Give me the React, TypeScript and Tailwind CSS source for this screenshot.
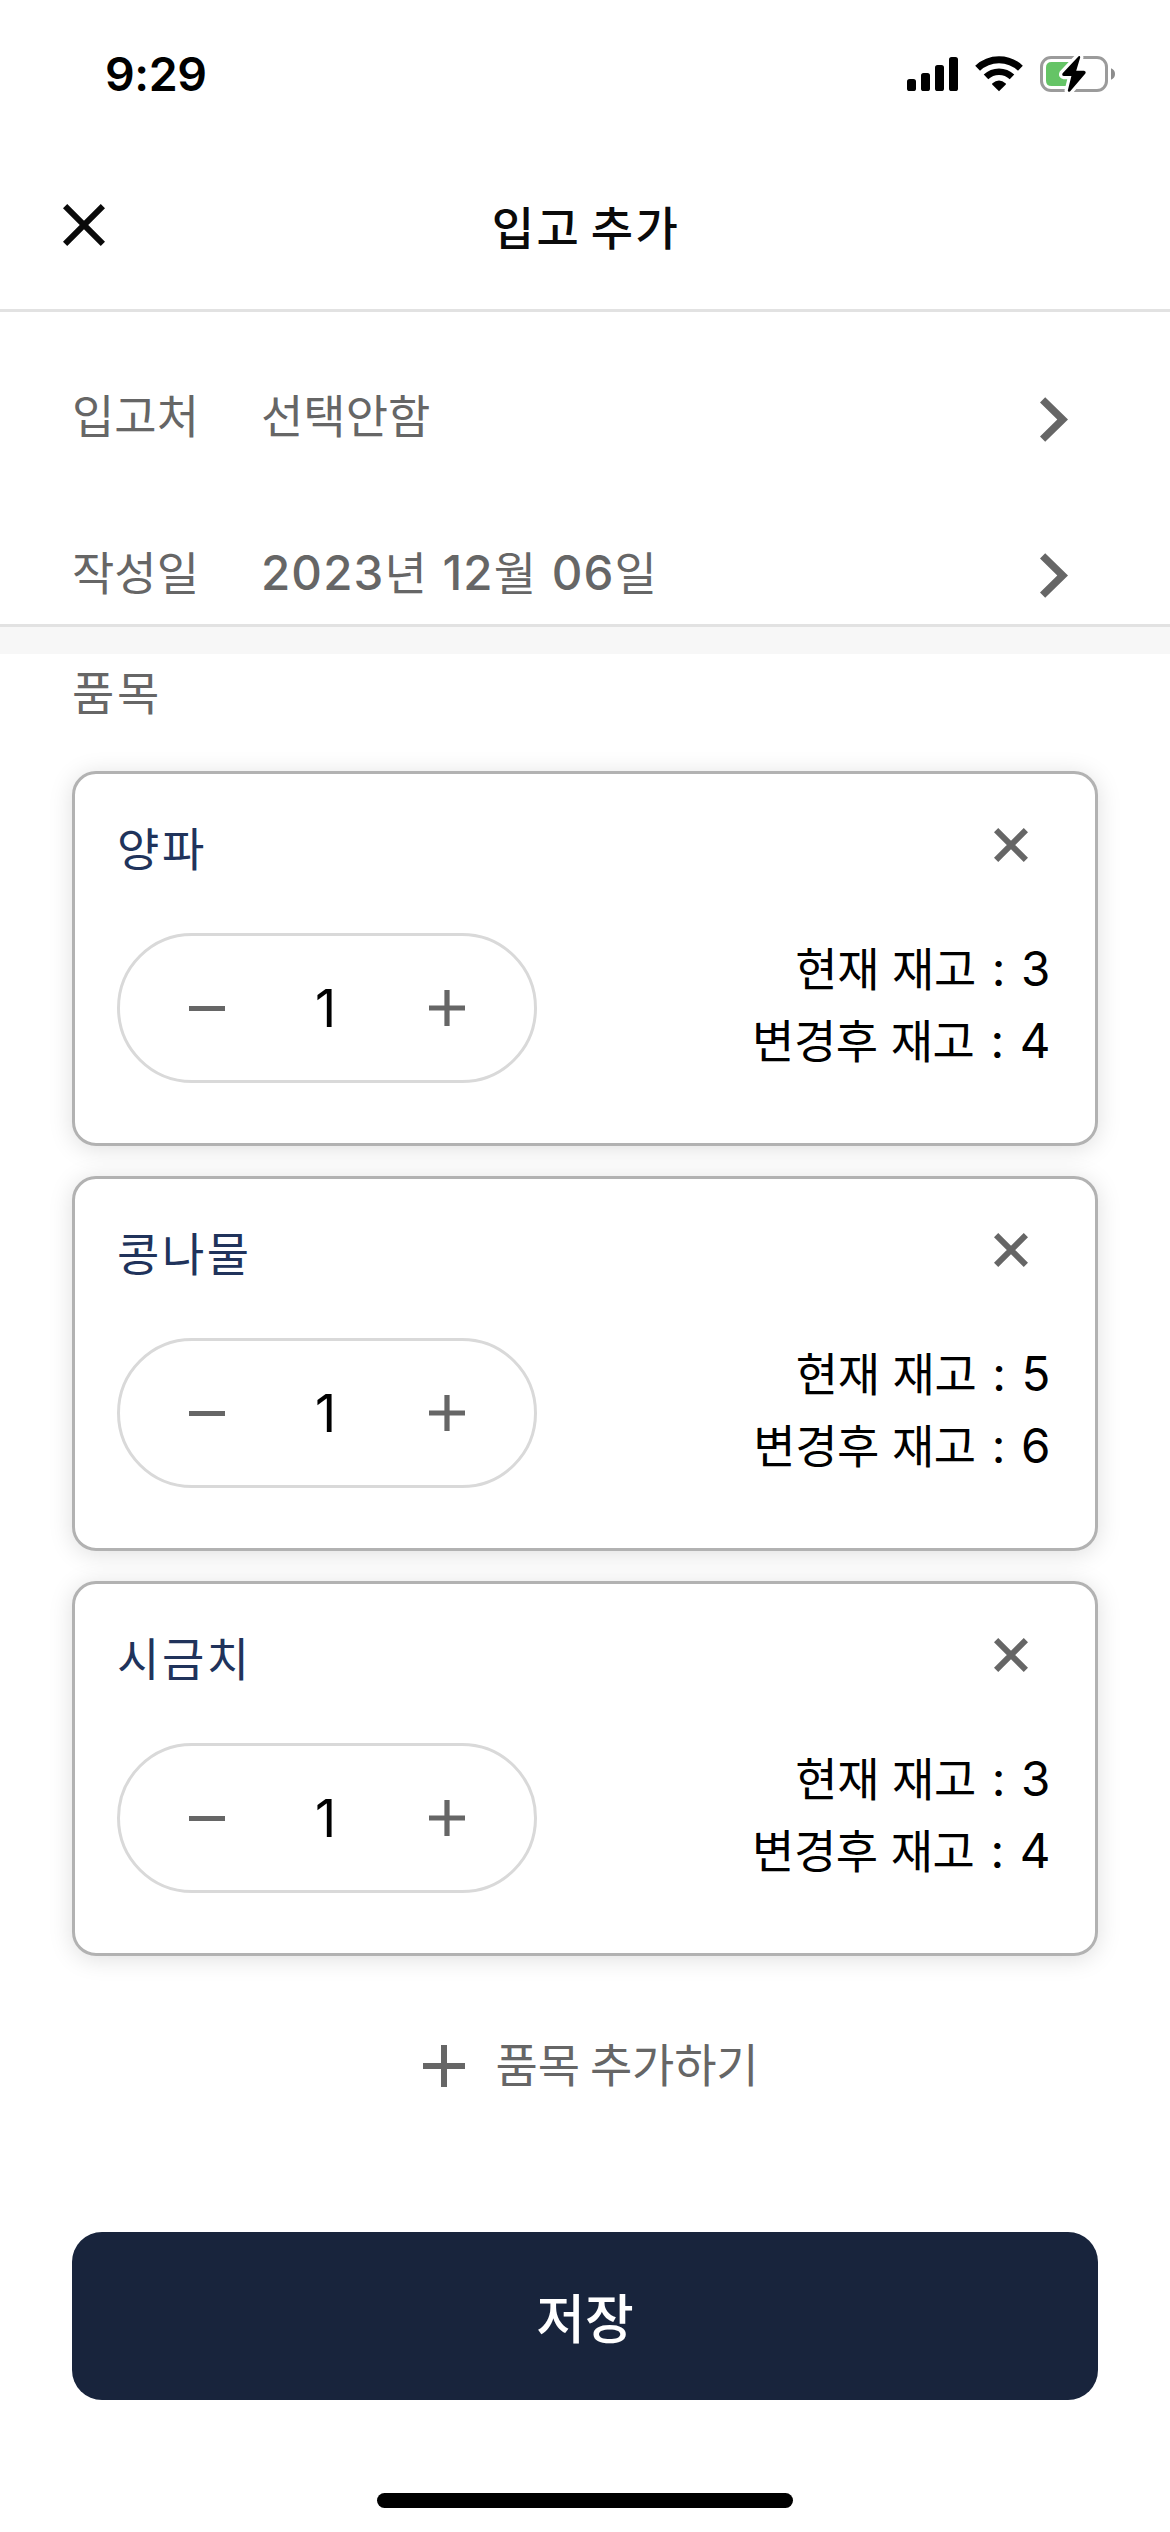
import React from "react";

type Item = { name: string; quantity: number; current: number; after: number };

const items: Item[] = [
  { name: "양파", quantity: 1, current: 3, after: 4 },
  { name: "콩나물", quantity: 1, current: 5, after: 6 },
  { name: "시금치", quantity: 1, current: 3, after: 4 },
];

function Num({ children, className = "" }: { children: React.ReactNode; className?: string }) {
  return <span className={`font-['Inter'] text-[47.5px] ${className}`}>{children}</span>;
}

function Cross({ size, stroke, color }: { size: number; stroke: number; color: string }) {
  const e = stroke * 0.3536;
  return (
    <svg width={size} height={size} viewBox={`0 0 ${size} ${size}`} className="block shrink-0">
      <path
        d={`M${e} ${e}L${size - e} ${size - e}M${size - e} ${e}L${e} ${size - e}`}
        stroke={color}
        strokeWidth={stroke}
        fill="none"
      />
    </svg>
  );
}

function Chevron() {
  return (
    <svg width="28" height="45" viewBox="0 0 28 45" className="block shrink-0">
      <path d="M5.2 0.2L28 22.5L5.2 44.8L0 39.6L17.3 22.5L0 5.4Z" fill="#666666" />
    </svg>
  );
}

function StatusIcons() {
  return (
    <svg width="210" height="40" viewBox="906 54 210 40" className="block">
      <rect x="907" y="79" width="9" height="12" rx="2.6" />
      <rect x="921" y="73" width="9" height="18" rx="2.6" />
      <rect x="935" y="65" width="9" height="26" rx="2.6" />
      <rect x="949" y="57" width="9" height="34" rx="2.6" />
      <path d="M977.6 68.2A31 31 0 0 1 1020.4 68.2" fill="none" stroke="#000" strokeWidth="7" />
      <path d="M986 76.9A19 19 0 0 1 1012 76.9" fill="none" stroke="#000" strokeWidth="6.6" />
      <path d="M992.2 83.6Q999 77.6 1005.8 83.6Q1006.2 84.2 1005.6 84.8L999 91.2L992.4 84.8Q991.8 84.2 992.2 83.6Z" />
      <rect x="1041.5" y="57.5" width="65" height="33" rx="9.5" fill="none" stroke="#9b9b9b" strokeWidth="3" />
      <path d="M1111 68.3Q1115 69.8 1115 74Q1115 78.2 1111 79.7Z" fill="#8c8c8c" />
      <path d="M1072 62H1051.5Q1046 62 1046 67.5V80.5Q1046 86 1051.5 86H1072Z" fill="#65c466" />
      <path
        d="M1078.6 56.2L1062.6 73.2Q1061.4 75.6 1064 76H1071.4L1067.8 90.6Q1068.2 92.6 1070 91.4L1085.4 73.6Q1086.4 71.4 1084 70.8H1076.2L1080.2 57.4Q1080.2 55.4 1078.6 56.2Z"
        fill="#000"
        stroke="#fff"
        strokeWidth="6.5"
        strokeLinejoin="round"
        paintOrder="stroke"
      />
    </svg>
  );
}

function Stepper({ value }: { value: number }) {
  return (
    <div className="flex h-[150px] w-[420px] items-center rounded-full border-[3px] border-[#d9d9d9] pl-[69px] pr-[69px]">
      <span className="h-[5px] w-9 bg-[#666666]" />
      <span className="flex-1 pr-[3px] pt-[2px] text-center font-['Inter'] text-[52px] leading-none text-black">{value}</span>
      <svg width="36" height="36" viewBox="0 0 36 36" className="block">
        <path d="M0 18H36M18 0V36" stroke="#666666" strokeWidth="5.2" />
      </svg>
    </div>
  );
}

function ItemCard({ item }: { item: Item }) {
  return (
    <div className="flex h-[375px] flex-col rounded-[24px] border-[3px] border-[#b2b2b2] bg-white px-[42px] shadow-[0_3px_24px_rgba(0,0,0,0.13)]">
      <div className="mt-[36px] flex h-[72px] items-center justify-between pr-[25px]">
        <span className="text-[46px] leading-[72px] tracking-[2.6px] text-[#20335b]">{item.name}</span>
        <div className="pb-[2px]">
          <Cross size={34} stroke={6} color="#666666" />
        </div>
      </div>
      <div className="mt-[51px] flex justify-between">
        <Stepper value={item.quantity} />
        <div className="-mt-[3px] mr-[3px] whitespace-pre text-right text-[46px] leading-[72px] tracking-[-0.4px] text-black [word-spacing:3px]">
          <div className="h-[72px]">
            현재 재고<Num> : {item.current}</Num>
          </div>
          <div className="h-[72px]">
            변경후 재고<Num> : {item.after}</Num>
          </div>
        </div>
      </div>
    </div>
  );
}

export default function App() {
  return (
    <div className="flex h-[2532px] w-[1170px] flex-col overflow-hidden bg-white font-['Noto_Sans_CJK_KR',sans-serif]">
      <div className="flex h-[132px] items-center justify-between pl-[105px] pr-[54px] pt-[16px]">
        <span className="font-['Inter'] text-[46.5px] font-semibold leading-none tracking-[-0.4px] text-black">9:29</span>
        <StatusIcons />
      </div>
      <header className="flex h-[180px] items-center border-b-[3px] border-[#e2e2e2] px-[63px] pt-[9px]">
        <Cross size={42} stroke={6} color="#0a0a0a" />
        <h1 className="flex-1 pr-[40px] text-center text-[46px] font-medium leading-[72px] tracking-[2.4px] text-[#0a0a0a] [word-spacing:-3px]">
          입고 추가
        </h1>
      </header>

      <section className="border-b-[3px] border-[#e2e2e2] pl-[72px] pr-[102px] pt-[29px] text-[46px] text-[#666666]">
        <div className="flex h-[156px] items-center">
          <span className="w-[189px] pb-[12px] leading-[72px]">입고처</span>
          <span className="flex-1 pb-[12px] leading-[72px]">선택안함</span>
          <Chevron />
        </div>
        <div className="flex h-[127px] items-center pt-[29px]">
          <span className="w-[189px] pb-[11px] leading-[72px]">작성일</span>
          <span className="flex-1 whitespace-pre pb-[8px] leading-[72px] [word-spacing:2px]">
            <Num className="font-medium tracking-[1.1px]">2023</Num>년<Num className="font-medium tracking-[1.1px]"> 12</Num>월
            <Num className="font-medium tracking-[1.1px]"> 06</Num>일
          </span>
          <Chevron />
        </div>
      </section>
      <div className="h-[27px] bg-[#f7f7f7]" />

      <main className="flex flex-col px-[72px]">
        <h2 className="h-[117px] text-[46px] font-normal leading-[72px] tracking-[2.6px] text-[#666666]">품목</h2>
        <div className="flex flex-col gap-[30px]">
          {items.map((item) => (
            <ItemCard key={item.name} item={item} />
          ))}
        </div>
        <button className="mt-[74px] flex h-[72px] items-center justify-center gap-[31px] pl-[11px] text-[46px] leading-[72px] tracking-[-0.2px] text-[#666666]">
          <svg width="42" height="42" viewBox="0 0 42 42" className="block">
            <path d="M0 21H42M21 0V42" stroke="#666666" strokeWidth="6" />
          </svg>
          <span className="pb-[8px]">품목 추가하기</span>
        </button>
        <button className="mt-[130px] h-[168px] rounded-[30px] bg-[#18243c] text-[53px] font-medium leading-[168px] text-white">저장</button>
      </main>
      <div className="mx-auto mt-[93px] h-[15px] w-[416px] rounded-full bg-black" />
    </div>
  );
}
